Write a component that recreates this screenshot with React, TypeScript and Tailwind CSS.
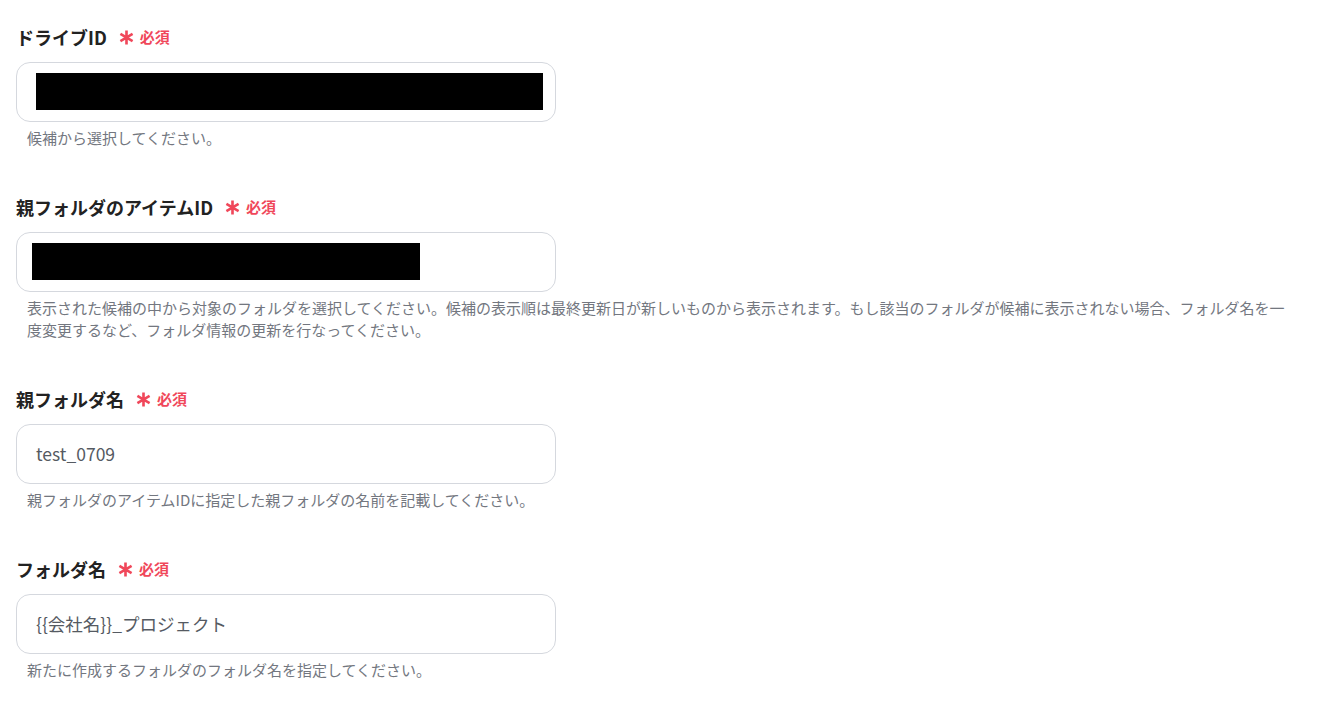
type Field = {
  label: string;
  help: string;
  value?: string;
  redact?: { w: string; x: string };
};

const fields: Field[] = [
  {
    label: "ドライブID",
    help: "候補から選択してください。",
    redact: { w: "w-[507px]", x: "ml-[19px]" },
  },
  {
    label: "親フォルダのアイテムID",
    help: "表示された候補の中から対象のフォルダを選択してください。候補の表示順は最終更新日が新しいものから表示されます。もし該当のフォルダが候補に表示されない場合、フォルダ名を一度変更するなど、フォルダ情報の更新を行なってください。",
    redact: { w: "w-[388px]", x: "ml-[15px]" },
  },
  {
    label: "親フォルダ名",
    help: "親フォルダのアイテムIDに指定した親フォルダの名前を記載してください。",
    value: "test_0709",
  },
  {
    label: "フォルダ名",
    help: "新たに作成するフォルダのフォルダ名を指定してください。",
    value: "{{会社名}}_プロジェクト",
  },
];

function RequiredMark() {
  return (
    <svg viewBox="0 0 16 16" className="ml-[12px] h-[15px] w-[15px]" fill="none" stroke="#f0475a" strokeWidth={2.8}>
      <path d="M8 0.5v15M1.5 4.25l13 7.5M1.5 11.75l13-7.5" />
    </svg>
  );
}

export default function App() {
  return (
    <div className="min-h-screen bg-white pl-4 pt-[25px] font-['Noto_Sans_CJK_JP','Noto_Sans',sans-serif]">
      <div className="flex flex-col gap-[46px]">
        {fields.map((f) => (
          <div key={f.label} className="flex flex-col">
            {/* label row */}
            <div className="flex h-6 items-center">
              <span className="text-[18px] font-bold text-[#222222]">{f.label}</span>
              <RequiredMark />
              <span className="ml-[6px] text-[15px] font-bold text-[#f0475a]">必須</span>
            </div>
            <div className="mt-[13px] flex h-[60px] w-[540px] items-center rounded-[14px] border border-[#d5d8de] bg-white">
              {f.redact ? (
                <div className={`mb-[2px] h-[37px] bg-black ${f.redact.w} ${f.redact.x}`} />
              ) : (
                <span className="ml-[19px] text-[17.5px] text-[#555a62]">{f.value}</span>
              )}
            </div>
            <p className="mt-[5px] w-[1278px] pl-[11px] text-[15px] leading-[22px] text-[#73777f]">
              {f.help}
            </p>
          </div>
        ))}
      </div>
    </div>
  );
}
